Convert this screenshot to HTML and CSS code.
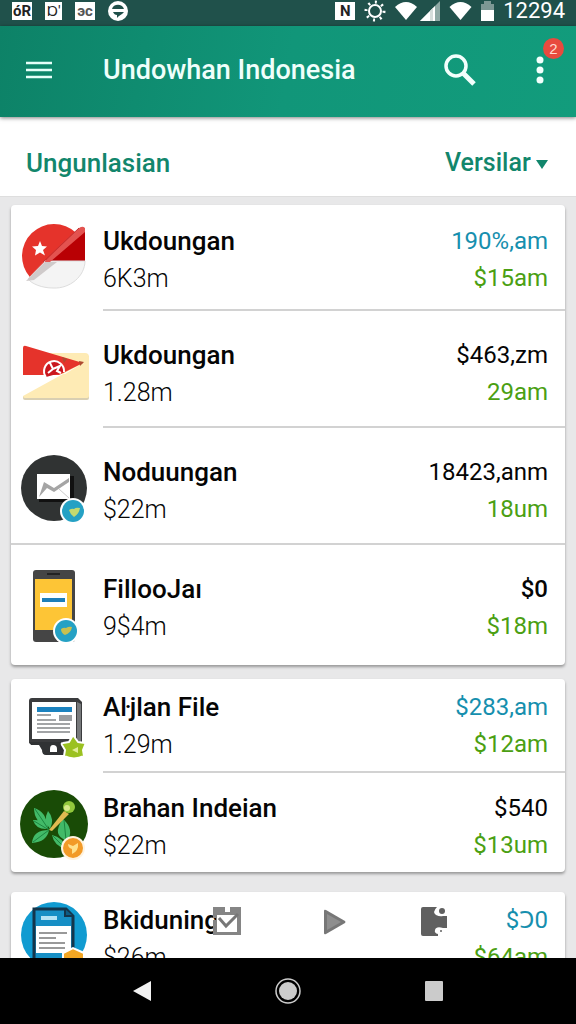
FILE: index.html
```html
<!DOCTYPE html>
<html lang="id">
    <head>
        <meta charset="UTF-8">
        <meta name="viewport" content="width=device-width, initial-scale=1">
        <title>Undowhan Indonesia</title>
        <link rel="stylesheet" href="styles.css">
    </head>
    <body>
        <div class="status">
            <span class="chip">óR</span>
            <span class="chip chip-thin">Ɒ'</span>
            <span class="chip chip-grey">эс</span>
            <svg class="status-logo" width="20" height="20" viewBox="0 0 20 20">
                <circle cx="10" cy="10" r="10" fill="#fff"/>
                <path d="M4 8C5 3 14 2 16 8M5 11h11c-2 3-5 3-7 6v-3c-2 0-3-1-4-3z" fill="#1f4f49"/>
            </svg>
            <div class="status-right">
                <span class="chip">N</span>
                <svg width="22" height="22" viewBox="0 0 22 22" fill="none" stroke="#fff">
                    <circle cx="11" cy="11" r="6" stroke-width="2"/>
                    <circle cx="11" cy="11" r="9" stroke-width="3" stroke-dasharray="2 5"/>
                </svg>
                <svg width="22" height="20" viewBox="0 0 22 20"><path d="M0 6Q11-4 22 6L11 19z" fill="#fff"/></svg>
                <svg class="signal" width="20" height="20" viewBox="0 0 20 20">
                    <path d="M0 20L20 0v20z" fill="#8fa9a5"/>
                    <path d="M0 20L15 5v15z" fill="#fff"/>
                    <path d="M10 10l3-3v13h-3z" fill="#d5dddb"/>
                </svg>
                <svg class="wifi" width="23" height="20" viewBox="0 0 22 20"><path d="M0 6Q11-4 22 6L11 19z" fill="#fff"/></svg>
                <svg class="battery" width="13" height="20" viewBox="0 0 13 20">
                    <path d="M3 0h7v3h3v7H0V3h3z" fill="#7d9894"/>
                    <path d="M0 9h13v11H0z" fill="#fff"/>
                </svg>
                <span class="clock">12294</span>
            </div>
        </div>

        <header class="bar">
            <button class="icon-btn" type="button" aria-label="Menu">
                <svg width="26" height="18" viewBox="0 0 26 18"><path d="M0 2h26M0 9h26M0 16h26" stroke="#e6fff9" stroke-width="2.500"/></svg>
            </button>
            <h1>Undowhan Indonesia</h1>
            <button class="icon-btn search" type="button" aria-label="Search">
                <svg width="32" height="32" viewBox="0 0 32 32" fill="none" stroke="#f2fffc">
                    <circle cx="12" cy="12" r="10" stroke-width="3.500"/>
                    <path d="M19 19l11 11" stroke-width="5"/>
                </svg>
            </button>
            <button class="icon-btn more" type="button" aria-label="More">
                <svg width="8" height="28" viewBox="0 0 8 28" fill="#f2fffc"><circle cx="4" cy="4" r="3.500"/><circle cx="4" cy="14" r="3.500"/><circle cx="4" cy="24" r="3.500"/></svg>
                <span class="count">2</span>
            </button>
        </header>

        <div class="filter">
            <h2>Ungunlasian</h2>
            <div class="sort">
                <select aria-label="Versi">
                    <option>Versilar</option>
                </select>
                <svg width="12" height="9" viewBox="0 0 12 9"><path d="M0 0h12L6 9z" fill="#12866c"/></svg>
            </div>
        </div>

        <main class="content">
            <ul class="card">
                <li class="row row-first">
                    <svg class="pic" viewBox="0 0 70 76">
                        <path d="M10 55.200A32 32 0 0 1 56 10.800L62 8 65 22 8 57z" fill="#e5332b"/>
                        <path d="M65 9v30H25z" fill="#b90004"/>
                        <path d="M25 39h40C65 54 50 67 33 66 22 66 12 62 8 57z" fill="#f4f4f4" stroke="#ddd"/>
                        <path d="M6 59L25 40h12L14 58z" fill="#cfcaca"/>
                        <path d="M9 55L58 7q4-4 7-1v4L30 40H23z" fill="#e35350"/>
                        <path d="M23 40L59 6" stroke="#c33131" fill="none"/>
                        <path d="M20 19l2 5 5 .5-4 3.500 2 5.500-5-3-5 3 1-5.500-4-3.500 6-.5z" fill="#fff"/>
                    </svg>
                    <div class="body">
                        <div class="name">Ukdoungan<small>6K3m</small></div>
                        <div class="sum blue">190%,am<small>$15am</small></div>
                    </div>
                </li>
                <li class="row">
                    <svg class="pic" viewBox="0 0 70 76">
                        <path d="M3 20h66v42q0 2-2 2H5q-2 0-2-2z" fill="#d9cfb2"/>
                        <path d="M30 17h35q4 0 4 4v39q0 2-2 2H5q-2 0-2-2V39z" fill="#feebb5"/>
                        <path d="M3 38h42L63 27 3 60z" fill="#fff"/>
                        <path d="M3 12q0-3 3-2l57 17-24 12H3z" fill="#e5332b"/>
                        <path d="M42 21l5 2-3 4zM59 25l5 1-4 4z" fill="#ae4b30"/>
                        <path d="M26 41a10 10 0 1 1 18-5z" fill="#c9161e"/>
                        <path d="M26 41a10 10 0 1 1 18-5M30 27l3 6 7-3-3 5 4 2M33 33l-5 4" fill="none" stroke="#fff" stroke-width="2"/>
                    </svg>
                    <div class="body">
                        <div class="name">Ukdoungan<small>1.28m</small></div>
                        <div class="sum">$463,zm<small>29am</small></div>
                    </div>
                </li>
                <li class="row row-full">
                    <svg class="pic" viewBox="0 0 70 76">
                        <circle cx="34" cy="35" r="33" fill="#303333"/>
                        <path d="M19 23h35v26H19z" fill="#111"/>
                        <path d="M17 21h33v25H17z" fill="#fff"/>
                        <path d="M24 29l10 6 15-10v4L34 39l-7-4-8 9z" fill="#a5a5a5"/>
                        <path d="M39 36l10 9" stroke="#ccc"/>
                        <circle cx="53" cy="58" r="13" fill="#fff"/>
                        <circle cx="53" cy="58" r="11" fill="#25a1c4"/>
                        <path d="M49 57q3-2 5-1 2-2 6-1-1 6-6 9-4-3-5-7z" fill="#c3d96f"/>
                    </svg>
                    <div class="body">
                        <div class="name">Noduungan<small>$22m</small></div>
                        <div class="sum">18423,anm<small>18um</small></div>
                    </div>
                </li>
                <li class="row row-last">
                    <svg class="pic" viewBox="0 0 70 76">
                        <rect x="13" y="0" width="42" height="72" rx="3" fill="#454545"/>
                        <path d="M27 3h13v2H27z" fill="#222"/>
                        <path d="M15 9h37v51H15z" fill="#fdc536"/>
                        <path d="M20 23h27v14H20z" fill="#fff"/>
                        <path d="M22 28h23v4H22z" fill="#1d7fba"/>
                        <circle cx="46" cy="61" r="13" fill="#fff"/>
                        <circle cx="46" cy="61" r="11" fill="#25a1c4"/>
                        <path d="M41 59q3-2 5-1 3-2 6-1-1 6-7 8-4-2-4-6z" fill="#c9c04f"/>
                    </svg>
                    <div class="body">
                        <div class="name">FillooJaı<small>9$4m</small></div>
                        <div class="sum"><b>$0</b><small>$18m</small></div>
                    </div>
                </li>
            </ul>

            <ul class="card">
                <li class="row row-tight">
                    <svg class="pic" viewBox="0 0 70 76">
                        <path d="M12 10h46l4 4v42H11q-2 0-2-2V13q0-3 3-3z" fill="#3a3b3d"/>
                        <path d="M57 14l4 2v39l-4-2z" fill="#77797b"/>
                        <path d="M12 14h44v37H12z" fill="#fff"/>
                        <path d="M17 19h35v5H17z" fill="#1b82bf"/>
                        <path d="M39 27h13v6H39z" fill="#9a9da0"/>
                        <path d="M17 27h14M17 32h19M17 36h33M17 40h33M17 44h33" stroke="#a2a4a6" stroke-width="2"/>
                        <path d="M9 54h48v13H26q-4 0-4-5l-3-5H11z" fill="#303234"/>
                        <path d="M30 61q0-4 3-4 4 0 4 4v3h-7z" fill="#fff"/>
                        <path d="M53 47l5 7 7 1q1 1 0 2l-2 5 1 6q-10 5-20 0l1-6-3-5q-1-2 1-2l6-1z" fill="#9bc121" stroke="#fff" stroke-width="2" stroke-linejoin="round"/>
                        <path d="M52 62l6-3v6z" fill="#e1ed9a"/>
                    </svg>
                    <div class="body">
                        <div class="name">Aŀjlan File<small>1.29m</small></div>
                        <div class="sum blue">$283,am<small>$12am</small></div>
                    </div>
                </li>
                <li class="row row-end">
                    <svg class="pic" viewBox="0 0 70 76">
                        <circle cx="34" cy="35" r="34" fill="#194b06"/>
                        <path d="M14 19q12 3 14 20-14-6-14-20zM28 22q7 8 2 18-7-9-2-18zM13 31q11-1 15 9-12 1-15-9zM12 54q1-13 17-13-2 12-17 13zM43 30q12 11 4 22-16-6-4-22zM32 46q11 2 14 14-12-3-14-14z" fill="#42ba68"/>
                        <path d="M15 20l14 21M14 32l15 9M13 53l16-12M44 31l2 20M33 47l12 12" stroke="#1c8640" fill="none"/>
                        <path d="M29 41l15-19 5 3-17 17z" fill="#dfbb51"/>
                        <circle cx="49" cy="18" r="6" fill="#91c83c"/>
                        <circle cx="47" cy="19" r="3" fill="#d5e989"/>
                        <circle cx="53" cy="59" r="12" fill="#fff3df"/>
                        <circle cx="53" cy="59" r="10" fill="#f29a27"/>
                        <path d="M48 55l5 2 5-3q1 8-6 11v-5q-4-1-4-5z" fill="#ffe08a"/>
                    </svg>
                    <div class="body">
                        <div class="name">Brahan Indeian<small>$22m</small></div>
                        <div class="sum">$540<small>$13um</small></div>
                    </div>
                </li>
            </ul>

            <ul class="card card-cut">
                <li class="row row-tight">
                    <svg class="pic" viewBox="0 0 70 76">
                        <circle cx="34" cy="34" r="33" fill="#119bd1"/>
                        <path d="M14 8h32l7 7v58H14z" fill="#168fc5" stroke="#14354b" stroke-width="3"/>
                        <path d="M45 8v7h8" fill="#0d5d86" stroke="#14354b" stroke-width="2"/>
                        <path d="M21 15h16v4H21z" fill="#b5e4f5"/>
                        <path d="M16 25h35v27H16z" fill="#fff"/>
                        <path d="M19 32h28M19 37h17M19 42h26M19 47h26" stroke="#999" stroke-width="2"/>
                        <path d="M43 52l10-5 11 5v20H43z" fill="#f3a623" stroke="#fff" stroke-width="2"/>
                    </svg>
                    <div class="body">
                        <div class="name">Bkiduning<small>$26m</small></div>
                        <div class="sum blue">$Ɔ0<small>$64am</small></div>
                    </div>
                </li>
            </ul>

            <div class="tools">
                <button class="icon-btn" type="button" aria-label="Select">
                    <svg width="30" height="30" viewBox="0 0 30 30">
                        <path d="M1 1h12v5h5V1h11v28H1V14h3v-2H1z" fill="#858585"/>
                        <path d="M5 9h20v17H5z" fill="#fff"/>
                        <path d="M7 12l7 8L26 8" stroke="#777" stroke-width="3" fill="none"/>
                    </svg>
                </button>
                <button class="icon-btn" type="button" aria-label="Play">
                    <svg width="30" height="30" viewBox="0 0 30 30"><path d="M5 5q0-2 2-1l19 11q1 1 0 2L7 28q-2 1-2-1z" fill="#777"/><path d="M8 8l14 8-14 8z" fill="#8e8e8e"/></svg>
                </button>
                <button class="icon-btn" type="button" aria-label="Extension">
                    <svg width="30" height="30" viewBox="0 0 30 30" fill="#606060"><path d="M5 1h14q-5 5-1 8 4 2 7 1h4v12h-4q-7-2-8 2-1 3 3 4v2H5q-2 0-2-2V3q0-2 2-2z"/><circle cx="24" cy="5" r="3"/><circle cx="23" cy="25" r="1"/></svg>
                </button>
            </div>
        </main>

        <nav class="nav">
            <button class="icon-btn" type="button" aria-label="Back">
                <svg width="18" height="20" viewBox="0 0 18 20"><path d="M0 10L18 0v20z" fill="#f2f2f2"/></svg>
            </button>
            <button class="icon-btn" type="button" aria-label="Home">
                <svg width="26" height="26" viewBox="0 0 26 26"><circle cx="13" cy="13" r="12" fill="none" stroke="#ccc" stroke-width="1.500"/><circle cx="13" cy="13" r="9" fill="#ccc"/></svg>
            </button>
            <button class="icon-btn" type="button" aria-label="Recent">
                <svg width="18" height="20" viewBox="0 0 18 20"><rect width="18" height="20" rx="1" fill="#cbcbcb"/></svg>
            </button>
        </nav>
    </body>
</html>
```
FILE: styles.css
```css
*{
    margin: 0;
    padding: 0;
    box-sizing: border-box;
}
html,body{
    height: 100%;
}
body{
    display: flex;
    flex-direction: column;
    overflow: hidden;
    background: #e8e8e9;
    color: #050505;
    font-family: Roboto, "Noto Sans", sans-serif;
    font-size: 24px;
}
ul{
    list-style: none;
}
svg{
    display: block;
}
.icon-btn{
    display: flex;
    align-items: center;
    justify-content: center;
    border: 0;
    background: none;
}

/* status bar */
.status{
    display: flex;
    flex: none;
    align-items: center;
    gap: 13px;
    height: 26px;
    padding: 0 11px 4px 12px;
    background: #20514b;
    color: #fff;
}
.status-right{
    display: flex;
    align-items: center;
    gap: 9px;
    margin-left: auto;
}
.chip{
    width: 20px;
    height: 18px;
    background: #fff;
    color: #222;
    font-size: 15px;
    font-weight: 700;
    line-height: 18px;
    text-align: center;
}
.chip-thin{
    width: 17px;
    font-weight: 400;
}
.chip-grey{
    color: #555;
}
.signal{
    margin-left: -6px;
}
.clock{
    font-size: 22px;
    line-height: 22px;
}

/* app bar */
.bar{
    position: relative;
    display: flex;
    flex: none;
    align-items: center;
    height: 91px;
    padding: 0 30px 4px 26px;
    background: linear-gradient(100deg, #0d8267, #119679 50%, #129c7c);
    box-shadow: 0 1px 4px rgba(0, 0, 0, .5);
    color: #effffb;
}
.bar h1{
    flex: 1;
    padding-left: 51px;
    font-size: 27px;
    font-weight: 500;
}
.search{
    margin-right: 58px;
}
.more{
    position: relative;
    width: 12px;
}
.count{
    position: absolute;
    top: -18px;
    left: 9px;
    width: 21px;
    height: 21px;
    border-radius: 50%;
    background: #e84a3e;
    color: #ffd9d0;
    font-size: 15px;
    line-height: 21px;
}

.filter{
    display: flex;
    flex: none;
    align-items: center;
    justify-content: space-between;
    height: 80px;
    padding: 12px 28px 0 26px;
    border-bottom: 1px solid #dedede;
    background: #fff;
    color: #12866c;
}
.filter h2{
    font-size: 26px;
    font-weight: 500;
}
.sort{
    display: flex;
    align-items: center;
    gap: 5px;
}
.sort select{
    border: 0;
    appearance: none;
    background: none;
    color: inherit;
    font: 500 25px Roboto, sans-serif;
}
.sort svg{
    margin-top: 4px;
}

/* list */
.content{
    position: relative;
    flex: 1;
    min-height: 0;
    overflow: hidden;
    padding: 8px 11px 0;
}
.card{
    margin-bottom: 14px;
    border-radius: 4px;
    background: #fff;
    box-shadow: 0 2px 3px rgba(0, 0, 0, .35);
}
.card-cut{
    margin-top: 20px;
}
.row{
    display: flex;
    padding-left: 9px;
}
.pic{
    flex: none;
    width: 70px;
    height: 76px;
    margin: 25px 13px 0 0;
    overflow: visible;
}
.body{
    display: flex;
    flex: 1;
    justify-content: space-between;
    padding: 25px 17px 14px 0;
    border-bottom: 2px solid #d2d2d2;
}
.row-first .pic{
    margin-top: 17px;
}
.row-first .body{
    padding-top: 17px;
    padding-bottom: 11px;
}
.row-full{
    border-bottom: 2px solid #d2d2d2;
}
.row-full .body{
    border: 0;
}
.row-last .body{
    padding-bottom: 19px;
    border: 0;
}
.row-tight .pic{
    margin-top: 9px;
}
.row-tight .body{
    padding-top: 9px;
    padding-bottom: 7px;
}
.row-end .pic{
    margin-top: 16px;
}
.row-end .body{
    padding-top: 16px;
    padding-bottom: 7px;
    border: 0;
}
.name{
    font-size: 26px;
    font-weight: 500;
    line-height: 38px;
}
.name small{
    display: block;
    font-size: 25px;
    font-weight: 300;
}
.sum{
    line-height: 38px;
    text-align: right;
}
.sum b{
    font-weight: 500;
}
.sum small{
    display: block;
    color: #4b9f13;
    font-size: 24px;
    line-height: 36px;
}
.blue{
    color: #168fae;
}

/* buttons floating over the list */
.tools{
    position: absolute;
    bottom: 22px;
    left: 212px;
    display: grid;
    grid-template-columns: 107px 99px 30px;
    justify-items: start;
}

.nav{
    display: grid;
    flex: none;
    grid-template-columns: repeat(3, 1fr);
    height: 66px;
    padding: 0 12%;
    background: #000;
}
```
